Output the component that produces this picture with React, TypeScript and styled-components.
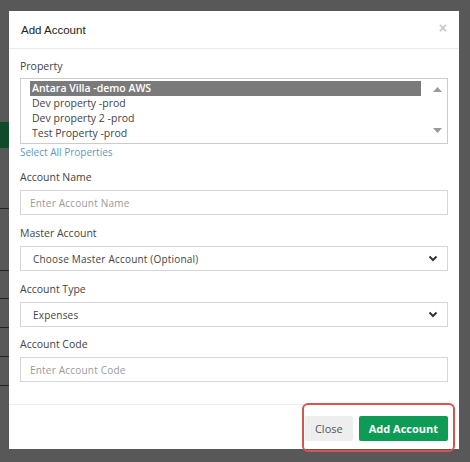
import React from "react";
import styled, { createGlobalStyle } from "styled-components";

const Global = createGlobalStyle`
  html, body { margin: 0; padding: 0; width: 470px; height: 462px; overflow: hidden; background: #585858; }
  * { box-sizing: border-box; }
`;

const Page = styled.div`
  width: 470px; height: 462px; position: relative; background: #585858;
  font-family: "Open Sans", "Noto Sans", sans-serif;
`;
const PageSide = styled.div`
  position: absolute; left: 0; top: 0; width: 9px; height: 462px;
  display: flex; flex-direction: column; padding-top: 122px; gap: 0;
`;
const GreenTab = styled.div`width: 9px; height: 26px; background: #0f4a2a;`;
const SideLine = styled.div<{ gap: number }>`width: 9px; height: 1px; background: #222; margin-top: ${p => p.gap}px;`;

const Modal = styled.div`
  position: absolute; left: 9px; top: 11px; width: 450px; height: 438px;
  background: #fff; display: flex; flex-direction: column;
`;
const Header = styled.div`
  height: 38px; flex: 0 0 38px; border-bottom: 1px solid #e9ecef; display: flex; align-items: center;
  justify-content: space-between; padding: 0 12px 0 12px;
`;
const Title = styled.div`font-family: "Liberation Sans", Arial, sans-serif; font-size: 11.5px; color: #222;`;
const X = styled.div`font-family: "Liberation Sans", Arial, sans-serif; font-size: 14px; color: #c8c8c8; font-weight: bold; margin-top: -4px;`;
const Body = styled.div`flex: 1; padding: 10px 11px 0 11px; display: flex; flex-direction: column;`;
const Label = styled.div<{ mt?: number }>`font-size: 10.5px; color: #444; margin-top: ${p => p.mt ?? 0}px; height: 14px; line-height: 14px;`;
const ListBox = styled.div`
  margin-top: 5px; height: 66px; flex: 0 0 66px; border: 1px solid #ccc; display: flex; padding: 2px 4px 2px 9px;
`;
const Options = styled.div`flex: 1; display: flex; flex-direction: column;`;
const Opt = styled.div<{ sel?: boolean }>`
  height: 15px; line-height: 15px; font-size: 10.5px; padding-left: 2px;
  color: ${p => (p.sel ? "#fff" : "#444")}; background: ${p => (p.sel ? "#7a7a7a" : "transparent")};
  font-weight: ${p => (p.sel ? 600 : 400)}; margin-right: 10px;
`;
const Scroll = styled.div`width: 12px; display: flex; flex-direction: column; justify-content: space-between; align-items: center; padding: 6px 0 8px;`;
const Link = styled.div`font-size: 10px; color: #5b9ac4; margin-top: 1px; height: 14px;`;
const Input = styled.div`
  margin-top: 6px; height: 25px; flex: 0 0 25px; border: 1px solid #d6d6d6; display: flex; align-items: center;
  padding: 0 9px; font-size: 10px; color: #9a9a9a; justify-content: space-between; letter-spacing: 0.2px;
`;
const SelectText = styled.span<{ pad?: number }>`color: #444; padding-left: ${p => p.pad ?? 0}px;`;
const Footer = styled.div`
  height: 50px; border-top: 1px solid #eceff1; display: flex; justify-content: flex-end; align-items: flex-start;
  margin: 22px -7px 0 -11px;
`;
const Hl = styled.div`
  margin-top: -2px; border: 2px solid #d9534f; border-radius: 6px; display: flex; gap: 6px;
  padding: 11px 5px 8px 1px; height: 49px;
`;
const Btn = styled.button<{ primary?: boolean }>`
  font-family: "Open Sans", "Noto Sans", sans-serif; border: none; border-radius: 2px; height: 25px;
  font-size: 11px; cursor: pointer; padding: 0 ${p => (p.primary ? 10 : 10)}px;
  background: ${p => (p.primary ? "#0d9b55" : "#eeeeee")}; color: ${p => (p.primary ? "#fff" : "#555")};
  font-weight: ${p => (p.primary ? 700 : 400)};
`;

const Chevron = () => (
  <svg width="10" height="7" viewBox="0 0 10 7"><path d="M1.5 1.5 L5 5 L8.5 1.5" fill="none" stroke="#333" strokeWidth="2" /></svg>
);
const Tri = ({ up }: { up?: boolean }) => (
  <svg width="9" height="5" viewBox="0 0 9 5"><path d={up ? "M0 5 L4.5 0 L9 5Z" : "M0 0 L4.5 5 L9 0Z"} fill="#999" /></svg>
);

export default function App() {
  return (
    <Page>
      <Global />
      <PageSide>
        <GreenTab />
        <SideLine gap={60} />
        <SideLine gap={61} />
        <SideLine gap={27} />
        <SideLine gap={28} />
        <SideLine gap={28} />
        <SideLine gap={28} />
      </PageSide>
      <Modal>
        <Header><Title>Add Account</Title><X>×</X></Header>
        <Body>
          <Label>Property</Label>
          <ListBox>
            <Options>
              <Opt sel>Antara Villa -demo AWS</Opt>
              <Opt>Dev property -prod</Opt>
              <Opt>Dev property 2 -prod</Opt>
              <Opt>Test Property -prod</Opt>
            </Options>
            <Scroll><Tri up /><Tri /></Scroll>
          </ListBox>
          <Link>Select All Properties</Link>
          <Label mt={11}>Account Name</Label>
          <Input>Enter Account Name</Input>
          <Label mt={11}>Master Account</Label>
          <Input><SelectText pad={3}>Choose Master Account (Optional)</SelectText><Chevron /></Input>
          <Label mt={11}>Account Type</Label>
          <Input><SelectText pad={3}>Expenses</SelectText><Chevron /></Input>
          <Label mt={10}>Account Code</Label>
          <Input>Enter Account Code</Input>
          <Footer>
            <Hl>
              <Btn>Close</Btn>
              <Btn primary>Add Account</Btn>
            </Hl>
          </Footer>
        </Body>
      </Modal>
    </Page>
  );
}
